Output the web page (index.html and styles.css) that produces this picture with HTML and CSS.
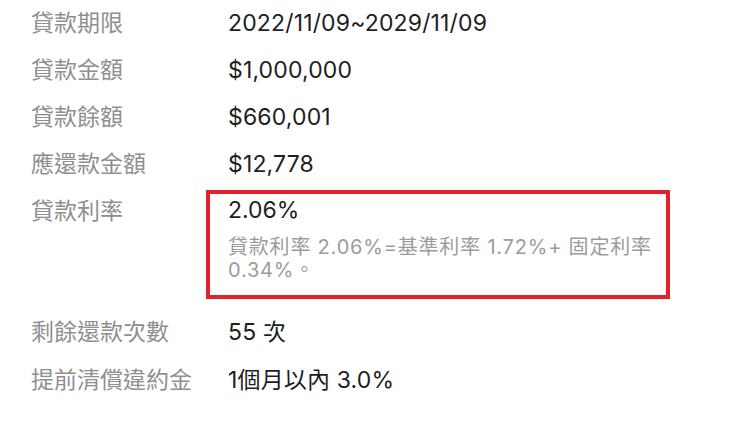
FILE: index.html
```html
<!DOCTYPE html>
<html lang="zh-Hant">
<head>
<meta charset="utf-8">
<link rel="stylesheet" href="styles.css">
</head>
<body>
<div class="list">
  <div class="row"><div class="label">貸款期限</div><div class="value">2022/11/09~2029/11/09</div></div>
  <div class="row"><div class="label">貸款金額</div><div class="value">$1,000,000</div></div>
  <div class="row"><div class="label">貸款餘額</div><div class="value">$660,001</div></div>
  <div class="row"><div class="label">應還款金額</div><div class="value">$12,778</div></div>
  <div class="row row-rate">
    <div class="label">貸款利率</div>
    <div class="rate-box">
      <div class="rate-main">2.06%</div>
      <div class="rate-note">貸款利率 2.06%=基準利率 1.72%+ 固定利率<br>0.34%。</div>
    </div>
  </div>
  <div class="row row-tall first-after"><div class="label">剩餘還款次數</div><div class="value">55 次</div></div>
  <div class="row row-tall"><div class="label">提前清償違約金</div><div class="value">1個月以內 3.0%</div></div>
</div>
</body>
</html>
```
FILE: styles.css
```css
html, body {
  margin: 0;
  padding: 0;
  background: #ffffff;
}
body {
  font-family: Inter, "Noto Sans CJK TC", sans-serif;
  width: 740px;
  height: 441px;
  overflow: hidden;
}
.list {
  padding-left: 31px;
  display: flex;
  flex-direction: column;
}
.row {
  display: flex;
  align-items: flex-start;
  font-size: 23px;
  line-height: 47px;
}
.label {
  width: 197px;
  flex-shrink: 0;
  color: #8f8f8f;
}
.value {
  color: #1e1e1e;
  letter-spacing: 0.15px;
}
.row-rate .label {
  line-height: 46px;
}
.rate-box {
  margin-top: 2px;
  margin-left: -22px;
  width: 464px;
  box-sizing: border-box;
  border: 4px solid #e2212b;
  padding: 0 4px 13px 18px;
}
.rate-main {
  color: #1e1e1e;
  line-height: 32px;
}
.rate-note {
  margin-top: 10px;
  font-size: 20px;
  line-height: 23px;
  letter-spacing: 0.8px;
  color: #9c9c9c;
  white-space: nowrap;
}
.row-tall {
  line-height: 48px;
}
.first-after {
  margin-top: 9px;
}
```
